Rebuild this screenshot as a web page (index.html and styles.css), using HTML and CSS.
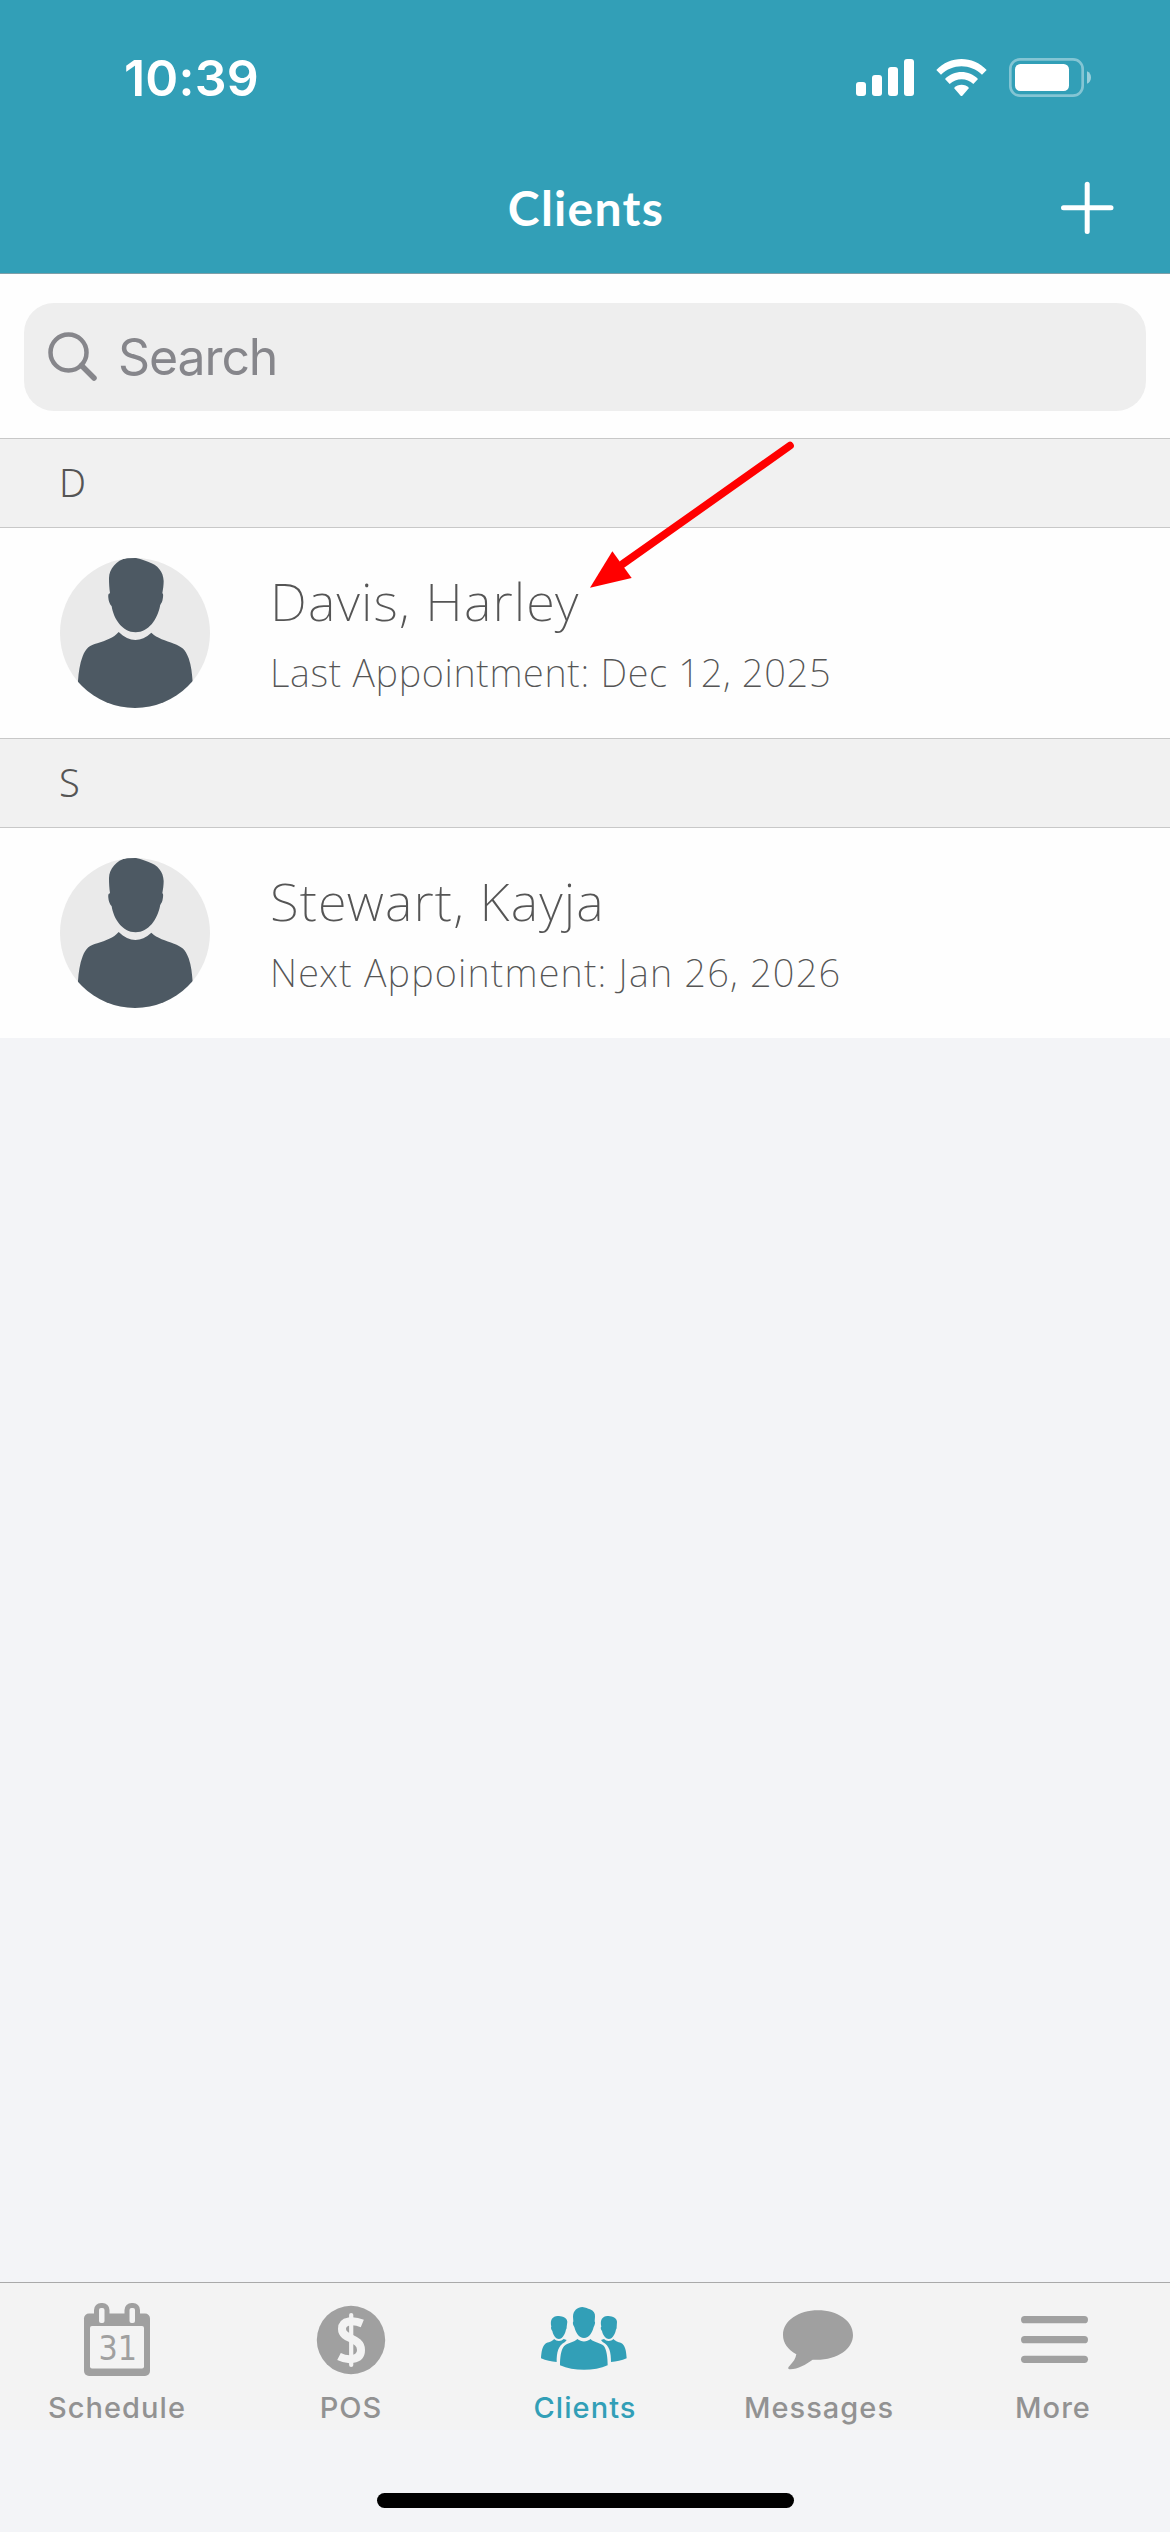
FILE: index.html
```html
<!DOCTYPE html>
<html lang="en">
<head>
<meta charset="utf-8">
<title>Clients</title>
<link rel="stylesheet" href="styles.css">
</head>
<body>
<svg class="defs" width="0" height="0" aria-hidden="true">
  <symbol id="avatar" viewBox="60 84 450 450">
    <clipPath id="avatar-clip"><circle cx="285" cy="309" r="225"/></clipPath>
    <circle cx="285" cy="309" r="225" fill="#eaeaea"/>
    <g clip-path="url(#avatar-clip)" fill="#4d5963">
      <path d="M276 82C296 84 310 91 324 95C354 105 370 125 371 153C371 167 369 178 367 190C371 192 369 201 368 208C366 221 361 221 360 229C352 268 326 307 287 307C247 307 221 267 215 229C211 222 207 220 205 203C204 194 206 190 210 190C208 174 207 160 207 144C208 111 238 82 276 82Z"/>
      <path d="M236 306C268 337 302 338 334 308C351 325 377 331 402 341C424 350 436 356 446 385C454 408 456 430 458 456L458 540H110L114 452C116 427 119 402 128 379C138 353 149 347 172 340C197 331 221 324 236 306Z"/>
    </g>
  </symbol>
</svg>
<div class="screen">
  <header class="header">
    <div class="status">
      <span class="time">10:39</span>
      <div class="indicators">
        <svg width="58" height="40" viewBox="108 84 174 120" fill="#fff">
          <rect x="108" y="156" width="30" height="42" rx="9"/>
          <rect x="156" y="135" width="30" height="63" rx="9"/>
          <rect x="204" y="111" width="30" height="87" rx="9"/>
          <rect x="252" y="87" width="30" height="111" rx="9"/>
        </svg>
        <svg width="51" height="40" viewBox="348 84 153 120" fill="#fff">
          <path d="M349 120C390 76 459 76 500 120L486 134C452 100 397 100 363 134Z"/>
          <path d="M375 147C402 119 447 119 474 147L460 162C441 143 409 143 389 162Z"/>
          <path d="M402 174C414 161 436 161 447 174L427 197Q424.500 199.500 422 197Z"/>
        </svg>
        <svg width="82" height="40" viewBox="567 84 246 120">
          <rect x="571" y="88" width="217" height="109" rx="29" fill="none" stroke="#fff" stroke-opacity=".4" stroke-width="8"/>
          <rect x="585" y="102" width="162" height="81" rx="16" fill="#fff"/>
          <path d="M801 124C817 130 817 155 801 161Z" fill="#fff" fill-opacity=".5"/>
        </svg>
      </div>
    </div>
    <div class="nav">
      <h1 class="title">Clients</h1>
      <svg class="add" width="54" height="54" viewBox="0 0 54 54" stroke="#fff" stroke-width="5" stroke-linecap="round">
        <path d="M27.200 3.200V50.500M3.500 26.800H51"/>
      </svg>
    </div>
  </header>

  <div class="search-area">
    <div class="search">
      <svg width="50" height="50" viewBox="0 0 50 50" fill="none" stroke="#86868b" stroke-linecap="round">
        <circle cx="20.500" cy="20.500" r="18" stroke-width="4.500"/>
        <path d="M33.500 33.500L46 46" stroke-width="5.500"/>
      </svg>
      <span class="placeholder">Search</span>
    </div>
  </div>

  <main class="list">
    <div class="section">D</div>
    <div class="client">
      <svg class="avatar" width="150" height="150"><use href="#avatar"/></svg>
      <div class="details">
        <div class="name">Davis, Harley</div>
        <div class="appointment last">Last Appointment: Dec 12, 2025</div>
      </div>
      <svg class="arrow" width="212" height="155" viewBox="564 54 636 465">
        <path d="M1170 77L668 432" stroke="#f00" stroke-width="23" stroke-linecap="round"/>
        <path d="M570 503L637 394L695 474Z" fill="#f00"/>
      </svg>
    </div>
    <div class="section">S</div>
    <div class="client">
      <svg class="avatar" width="150" height="150"><use href="#avatar"/></svg>
      <div class="details">
        <div class="name">Stewart, Kayja</div>
        <div class="appointment">Next Appointment: Jan 26, 2026</div>
      </div>
    </div>
  </main>

  <nav class="tabs">
    <div class="tab">
      <svg width="100" height="100" viewBox="0 0 100 100">
        <g fill="#a0a0a0">
          <rect x="17" y="30.500" width="66" height="62.500" rx="5"/>
          <rect x="27" y="20" width="15.500" height="24" rx="7"/>
          <rect x="57.500" y="20" width="15.500" height="24" rx="7"/>
        </g>
        <g fill="#f3f3f3">
          <rect x="32" y="25" width="5.500" height="15" rx="2"/>
          <rect x="62.500" y="25" width="5.500" height="15" rx="2"/>
          <rect x="23" y="43" width="54" height="42.500" rx="2"/>
        </g>
        <text class="day" x="31.500" y="77" textLength="38.500" lengthAdjust="spacingAndGlyphs">31</text>
      </svg>
      <span>Schedule</span>
    </div>
    <div class="tab">
      <svg width="100" height="100" viewBox="0 0 100 100">
        <circle cx="50" cy="57" r="34.200" fill="#a0a0a0"/>
        <g fill="none" stroke="#f3f3f3">
          <path d="M61.300 40.500C53 37 41 37 41 46C41 57 60 54 60 67C60 78 46 77.500 38 73.500" stroke-width="8"/>
          <path d="M50.200 32V82" stroke-width="4.200" stroke-linecap="round"/>
        </g>
      </svg>
      <span>POS</span>
    </div>
    <div class="tab active">
      <svg width="100" height="100" viewBox="105 69 300 300" fill="#329fb7">
        <path d="M247 141C258 142 263 146 270 148C281 152 286 160 285 170L284 184C287 188 284 195 281 201C277 217 268 234 252 234C236 234 227 217 223 201C219 196 217 188 220 184L219 170C219 152 233 141 247 141Z"/>
        <path d="M232 237C245 247 259 247 272 237C280 247 302 249 311 257C320 267 323 293 323 316C283 334 221 334 180 316C180 293 183 269 192 259C202 248 224 247 232 237Z"/>
        <path d="M173 168C182 168 201 171 202 185L200 201C201 206 197 209 197 213C193 227 185 237 177 237C168 237 160 227 157 213C153 208 152 201 154 200C149 179 158 169 173 168Z"/>
        <path d="M322 168C331 168 350 171 351 185L350 201C351 206 347 209 347 213C343 227 335 237 327 237C318 237 309 227 306 213C302 208 301 201 304 200C299 179 308 169 322 168Z"/>
        <path d="M162 237C171 245 183 245 191 237L200 240L195 246C174 256 170 279 170 306C154 305 138 302 123 295C124 278 126 260 136 251C145 246 157 245 162 237Z"/>
        <path d="M341 237C332 245 320 245 312 237L303 240L308 246C329 256 333 279 333 306C349 305 365 302 380 295C379 278 377 260 367 251C358 246 346 245 341 237Z"/>
      </svg>
      <span>Clients</span>
    </div>
    <div class="tab">
      <svg width="100" height="100" viewBox="807 69 300 300" fill="#a0a0a0">
        <path d="M954 151C1012 151 1059 182 1059 225C1059 268 1010 303 938 299C917 314 894 327 871 328C863 328 863 322 869 317C880 306 887 296 889 283C864 269 849 249 849 225C849 182 896 151 954 151Z"/>
      </svg>
      <span>Messages</span>
    </div>
    <div class="tab">
      <svg width="100" height="100" viewBox="429 69 300 300" fill="#a0a0a0">
        <rect x="483" y="168" width="201" height="22" rx="11"/>
        <rect x="483" y="228" width="201" height="22" rx="11"/>
        <rect x="483" y="287" width="201" height="22" rx="11"/>
      </svg>
      <span>More</span>
    </div>
  </nav>
  <footer class="home"><div class="home-bar"></div></footer>
</div>
</body>
</html>
```
FILE: styles.css
```css
* { box-sizing: border-box; }
body { margin: 0; background: #f3f4f7; }
svg { display: block; flex: none; }
.defs { position: absolute; }

.screen {
  width: 1170px;
  height: 2532px;
  display: flex;
  flex-direction: column;
  font-family: "Noto Sans", sans-serif;
  color: #555;
}

.header {
  height: 274px;
  background: #329fb7;
  border-bottom: 1px solid #7f9fa8;
  color: #fff;
}
.status {
  height: 156px;
  padding: 58px 79px 0 124px;
  display: flex;
  justify-content: space-between;
  align-items: flex-start;
}
.time {
  font: 600 50px/40px Inter, sans-serif;
  letter-spacing: 0.200px;
}
.indicators { display: flex; gap: 22px; }
.nav {
  height: 104px;
  display: grid;
  grid-template-columns: 1fr auto 1fr;
  align-items: center;
  padding-right: 56px;
  padding-left: 56px;
}
.title {
  grid-column: 2;
  margin: 0;
  padding-left: 2px;
  font: 700 48px/60px Lato, sans-serif;
  letter-spacing: 1.300px;
}
.add { justify-self: end; }

.search-area {
  height: 164px;
  padding: 29px 24px 0;
  background: #fefefe;
}
.search {
  height: 108px;
  display: flex;
  align-items: center;
  gap: 20px;
  padding: 0 24px;
  border-radius: 30px;
  background: #eee;
}
.placeholder {
  font: 400 50px/60px Inter, sans-serif;
  letter-spacing: -1.100px;
  color: #86868b;
}

.list { flex: 1; }
.section {
  height: 90px;
  padding-left: 59px;
  border: solid #c8c8c8;
  border-width: 1px 0;
  background: #f1f1f1;
  font-weight: 300;
  font-size: 38px;
  line-height: 87px;
}
.client {
  position: relative;
  height: 210px;
  display: flex;
  gap: 60px;
  padding: 30px 60px 0;
  background: #fefefe;
}
.details { padding-top: 11px; }
.name {
  font-weight: 220;
  font-size: 52.500px;
  line-height: 64px;
  letter-spacing: 1.150px;
}
.appointment {
  margin-top: 6px;
  font-weight: 220;
  font-size: 38px;
  line-height: 66px;
  letter-spacing: 1.200px;
}
.last { letter-spacing: 0.680px; }
.arrow {
  position: absolute;
  left: 588px;
  top: -90px;
  overflow: visible;
}

.tabs {
  height: 148px;
  display: grid;
  grid-template-columns: repeat(5, 1fr);
  border-top: 1px solid #a9a9a9;
  background: #f3f3f3;
}
.tab {
  display: flex;
  flex-direction: column;
  align-items: center;
  font: 500 29px/50px Inter, sans-serif;
  letter-spacing: 1.050px;
  color: #929292;
}
.active { color: #329fb7; }
.day {
  font: 400 33px "DejaVu Sans", sans-serif;
  letter-spacing: 0;
  fill: #a0a0a0;
}

.home {
  height: 102px;
  display: flex;
  justify-content: center;
  padding-top: 63px;
}
.home-bar {
  width: 417px;
  height: 15px;
  border-radius: 8px;
  background: #000;
}
```
